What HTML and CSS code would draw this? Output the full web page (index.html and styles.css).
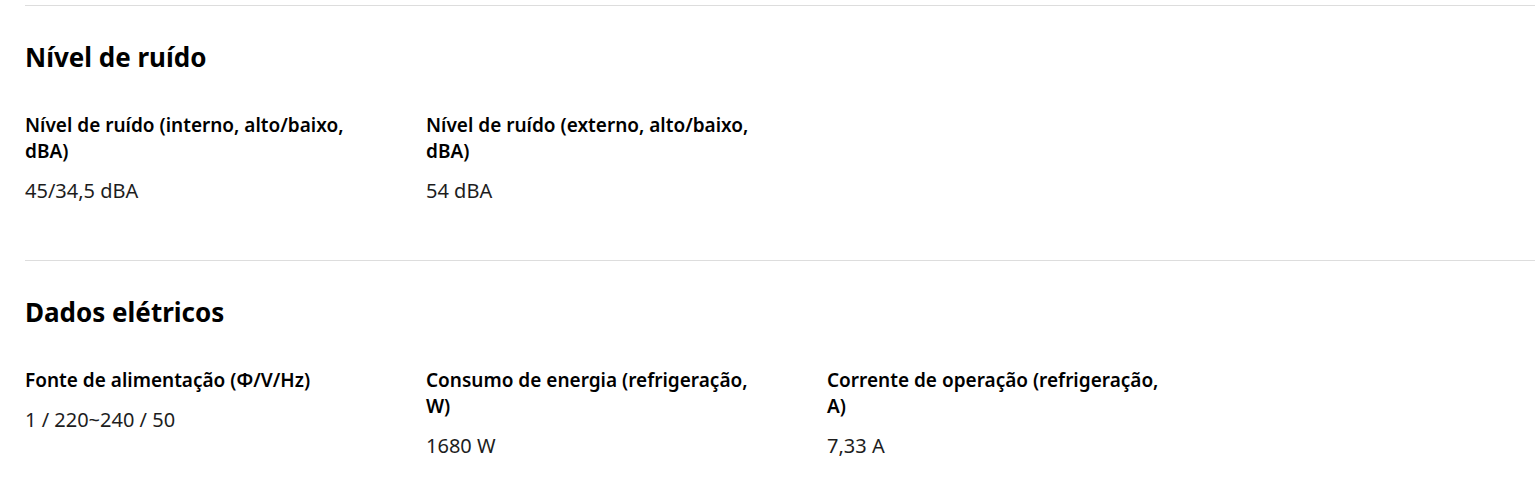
FILE: index.html
```html
<!DOCTYPE html>
<html lang="pt">
<head>
<meta charset="utf-8">
<title>Especificações</title>
<link rel="stylesheet" href="styles.css">
</head>
<body>
<main class="specs">
  <section class="spec-section">
    <h2 class="spec-title">Nível de ruído</h2>
    <div class="spec-grid">
      <div class="spec-item">
        <p class="spec-label">Nível de ruído (interno, alto/baixo, dBA)</p>
        <p class="spec-value">45/34,5 dBA</p>
      </div>
      <div class="spec-item">
        <p class="spec-label">Nível de ruído (externo, alto/baixo, dBA)</p>
        <p class="spec-value">54 dBA</p>
      </div>
    </div>
  </section>
  <section class="spec-section">
    <h2 class="spec-title">Dados elétricos</h2>
    <div class="spec-grid">
      <div class="spec-item">
        <p class="spec-label">Fonte de alimentação (Φ/V/Hz)</p>
        <p class="spec-value">1 / 220~240 / 50</p>
      </div>
      <div class="spec-item">
        <p class="spec-label">Consumo de energia (refrigeração, W)</p>
        <p class="spec-value">1680 W</p>
      </div>
      <div class="spec-item">
        <p class="spec-label">Corrente de operação (refrigeração, A)</p>
        <p class="spec-value">7,33 A</p>
      </div>
    </div>
  </section>
</main>
</body>
</html>
```
FILE: styles.css
```css
html, body {
  margin: 0;
  padding: 0;
  background: #fff;
}

body {
  font-family: "Noto Sans", "Open Sans", sans-serif;
  color: #000;
  overflow: hidden;
}

.specs {
  padding: 5px 0 0 25px;
}

.spec-section {
  border-top: 1px solid #dddddd;
  padding: 34px 0 55px;
}

.spec-title {
  margin: 0 0 38px;
  font-size: 26px;
  line-height: 34px;
  font-weight: 700;
  color: #000;
}

.spec-grid {
  display: grid;
  grid-template-columns: repeat(3, 338px);
  column-gap: 63px;
}

.spec-item {
  display: flex;
  flex-direction: column;
}

.spec-label {
  margin: 0 0 13px;
  font-size: 19px;
  line-height: 26px;
  font-weight: 600;
  color: #000;
}

.spec-value {
  margin: 0;
  font-size: 20px;
  line-height: 28px;
  font-weight: 400;
  color: #1d1d1d;
}
```
